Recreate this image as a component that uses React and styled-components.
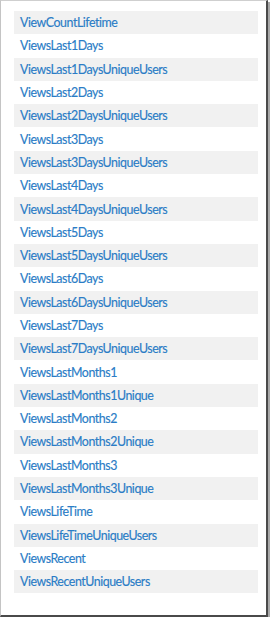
import React from "react";
import styled, { createGlobalStyle } from "styled-components";

const Global = createGlobalStyle`
  html, body { margin: 0; padding: 0; background: #ffffff; }
  body { font-family: Lato, "Open Sans", "Noto Sans", sans-serif; }
`;

const Frame = styled.div`
  box-sizing: border-box;
  width: 268px;
  height: 617px;
  background: #ffffff;
  border-left: 1px solid #c4c4c4;
  border-top: 1px solid #cfcfcf;
  border-right: 2px solid #4a4a4a;
  border-bottom: 2px solid #4a4a4a;
  box-shadow: 2px 2px 0 #a8a8a8;
  padding: 10px 8px 0 13px;
`;

const List = styled.ul`
  list-style: none;
  margin: 0;
  padding: 0;
  display: flex;
  flex-direction: column;
`;

const Row = styled.li`
  height: 23.3px;
  display: flex;
  align-items: center;
  padding-left: 6px;
  background: ${(p) => (p.$shaded ? "#f1f1f1" : "transparent")};
  color: #2a7cc6;
  font-family: Lato, "Open Sans", "Noto Sans", sans-serif;
  font-size: 12.4px;
  letter-spacing: -0.45px;
  -webkit-text-stroke: 0.15px #2a7cc6;
  white-space: nowrap;
`;

const items = [
  "ViewCountLifetime",
  "ViewsLast1Days",
  "ViewsLast1DaysUniqueUsers",
  "ViewsLast2Days",
  "ViewsLast2DaysUniqueUsers",
  "ViewsLast3Days",
  "ViewsLast3DaysUniqueUsers",
  "ViewsLast4Days",
  "ViewsLast4DaysUniqueUsers",
  "ViewsLast5Days",
  "ViewsLast5DaysUniqueUsers",
  "ViewsLast6Days",
  "ViewsLast6DaysUniqueUsers",
  "ViewsLast7Days",
  "ViewsLast7DaysUniqueUsers",
  "ViewsLastMonths1",
  "ViewsLastMonths1Unique",
  "ViewsLastMonths2",
  "ViewsLastMonths2Unique",
  "ViewsLastMonths3",
  "ViewsLastMonths3Unique",
  "ViewsLifeTime",
  "ViewsLifeTimeUniqueUsers",
  "ViewsRecent",
  "ViewsRecentUniqueUsers",
];

export default function App() {
  return (
    <>
      <Global />
      <Frame>
        <List>
          {items.map((t, i) => (
            <Row key={t} $shaded={i % 2 === 0}>
              {t}
            </Row>
          ))}
        </List>
      </Frame>
    </>
  );
}
